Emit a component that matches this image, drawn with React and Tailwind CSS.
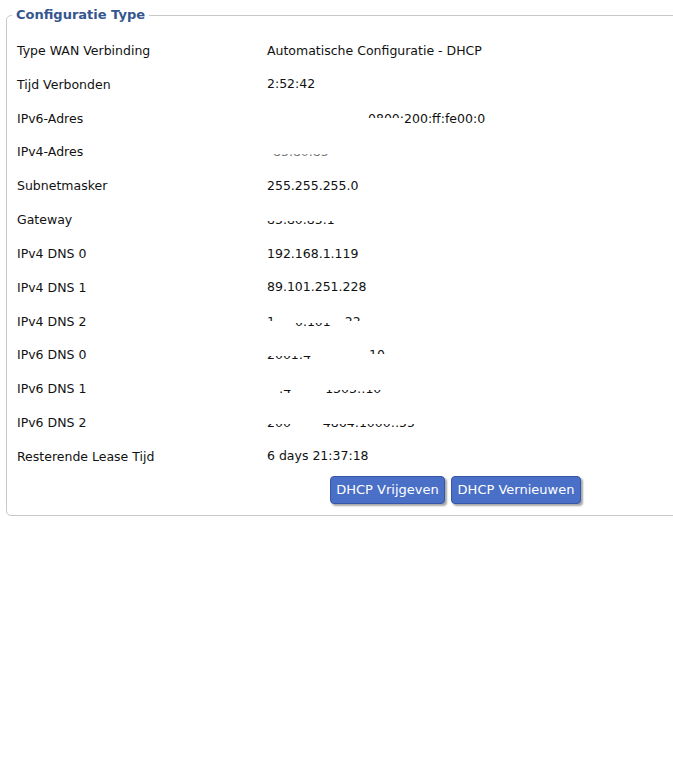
import React from 'react';

// Stuk tekst waarvan alleen de boven- of onderkant zichtbaar is (afgeschermde adressen)
const Top = ({ children }) => (
    <span className="block h-[16px]">
        <span className="block h-[7px] overflow-hidden leading-[16px] whitespace-pre">{children}</span>
    </span>
);

const Bottom = ({ children }) => (
    <span className="block h-[16px]">
        <span className="block mt-[9px] h-[7px] overflow-hidden">
            <span className="block -mt-[9px] leading-[16px] whitespace-pre">{children}</span>
        </span>
    </span>
);

const Gap = ({ w }) => <span className={`block h-[16px] ${w}`} />;

const rows = [
    { label: 'Type WAN Verbinding', value: 'Automatische Configuratie - DHCP' },
    { label: 'Tijd Verbonden', value: '2:52:42' },
    {
        label: 'IPv6-Adres',
        value: (
            <>
                <Gap w="w-[101px]" />
                <Top>0800:</Top>
                <span className="block leading-[16px]">200:ff:fe00:0</span>
            </>
        ),
    },
    {
        label: 'IPv4-Adres',
        value: (
            <>
                <Gap w="w-[6px]" />
                <span className="block h-[16px]">
                    <span className="block mt-[10px] h-[3px] overflow-hidden">
                        <span className="block -mt-[10px] leading-[16px] text-[#777]">85.80.85</span>
                    </span>
                </span>
            </>
        ),
    },
    { label: 'Subnetmasker', value: '255.255.255.0' },
    { label: 'Gateway', value: <Bottom>85.80.85.1</Bottom> },
    { label: 'IPv4 DNS 0', value: '192.168.1.119' },
    { label: 'IPv4 DNS 1', value: '89.101.251.228' },
    {
        label: 'IPv4 DNS 2',
        value: (
            <>
                <Top>1</Top>
                <Gap w="w-[20px]" />
                <Bottom>0.101</Bottom>
                <Gap w="w-[14px]" />
                <Top>22</Top>
            </>
        ),
    },
    {
        label: 'IPv6 DNS 0',
        value: (
            <>
                <Bottom>2001:4</Bottom>
                <Gap w="w-[58px]" />
                <Top>10</Top>
            </>
        ),
    },
    {
        label: 'IPv6 DNS 1',
        value: (
            <>
                <Gap w="w-[12px]" />
                <Bottom>:4</Bottom>
                <Gap w="w-[34px]" />
                <Bottom>1303::10</Bottom>
            </>
        ),
    },
    {
        label: 'IPv6 DNS 2',
        value: (
            <>
                <Bottom>200</Bottom>
                <Gap w="w-[32px]" />
                <Bottom>4864:1000::55</Bottom>
            </>
        ),
    },
    { label: 'Resterende Lease Tijd', value: '6 days 21:37:18' },
];

const Knop = ({ children, w }) => (
    <button
        type="button"
        className={`${w} h-[28px] rounded-[4px] border border-[#3657a8] bg-[#4a6fc7] text-white text-[13px] leading-[16px] shadow-[2px_2px_2px_rgba(0,0,0,0.35)]`}
    >
        {children}
    </button>
);

export default function App() {
    return (
        <div className="min-h-[771px] w-full overflow-x-hidden bg-white text-[#111] font-['DejaVu_Sans',sans-serif] text-[12.5px]">
            <fieldset className="mt-[6px] ml-[6px] w-[672px] rounded-[5px] border border-[#c9c9c9]">
                <legend className="ml-[5px] px-[4px] text-[13px] leading-[18px] font-bold text-[#34568f]">
                    Configuratie Type
                </legend>
                <div className="pt-[10px] pl-[10px]">
                    {rows.map((r) => (
                        <div key={r.label} className="grid grid-cols-[250px_1fr] h-[33.83px] items-center">
                            <span className="leading-[16px]">{r.label}</span>
                            <div className="flex items-center">{r.value}</div>
                        </div>
                    ))}
                    <div className="flex gap-[6px] pl-[313px] pt-[2px] pb-[11px]">
                        <Knop w="w-[115px]">DHCP Vrijgeven</Knop>
                        <Knop w="w-[130px]">DHCP Vernieuwen</Knop>
                    </div>
                </div>
            </fieldset>
        </div>
    );
}
